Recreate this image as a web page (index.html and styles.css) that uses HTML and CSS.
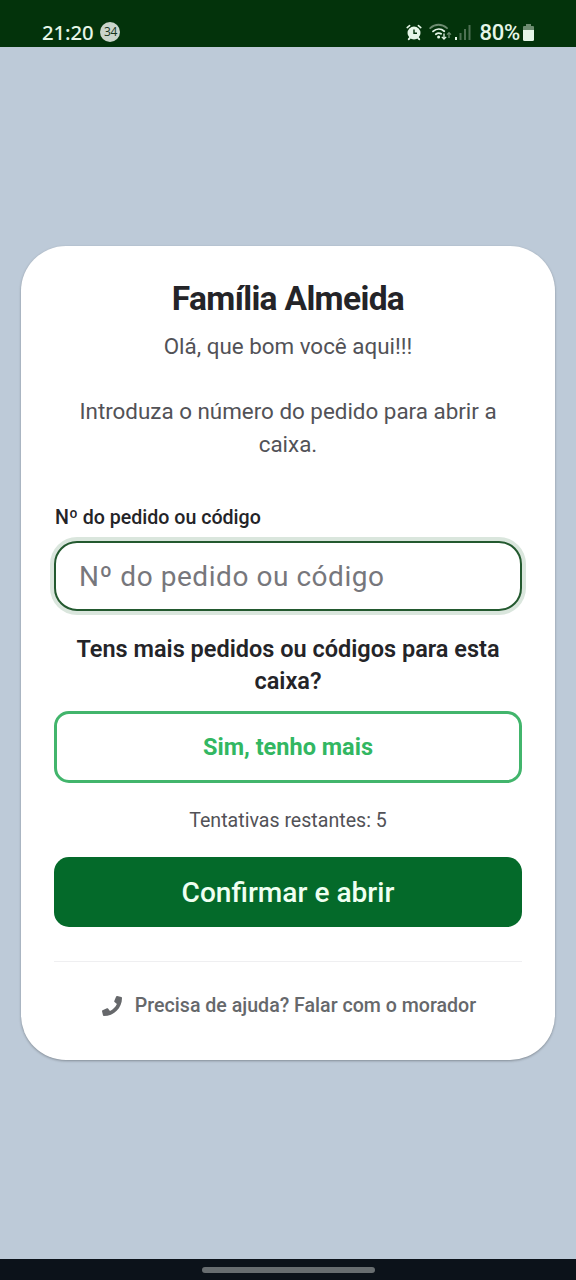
FILE: index.html
```html
<!DOCTYPE html>
<html lang="pt">
<head>
<meta charset="utf-8">
<title>Família Almeida</title>
<link rel="stylesheet" href="styles.css">
</head>
<body>
<header class="status">
  <div class="status-left"><span class="clock">21:20</span><span class="count">34</span></div>
  <div class="status-right">
    <svg class="alarm" width="16" height="17" viewBox="0 0 16 17"><g fill="none" stroke="#e6f6e8" stroke-linecap="round"><path stroke-width="1.6" d="M1.2 3.6 3.6 1.6M14.8 3.6 12.4 1.6"/><path stroke-width="2" d="M4 13.8 2.8 15.2M12 13.8l1.2 1.4"/></g><circle cx="8" cy="9" r="6.5" fill="#e6f6e8"/><path d="M8 5.5V9.3H11" fill="none" stroke="#03330b" stroke-width="1.4"/></svg>
    <svg class="wifi" width="23" height="18" viewBox="0 0 23 18"><g fill="none" stroke-linecap="round" stroke-width="1.8"><path stroke="#6d8b70" d="M1.2 5.2C6 .6 13 .6 18 5.2"/><path stroke="#e6f6e8" d="M4 8.400c3.500-3.100 8-3.100 11.300-.2M6.800 11.300c1.700-1.400 3.700-1.500 5.300-.5"/></g><circle cx="9.600" cy="14" r="1.500" fill="#e6f6e8"/><path d="M15 10.500v5.500m-2.200-2.100 2.200 2.200 2.200-2.200" fill="none" stroke="#e6f6e8" stroke-width="1.300"/><path d="M20 15V9.600m-2 2 2-2 2 2" fill="none" stroke="#6d8b70" stroke-width="1.300"/></svg>
    <svg class="signal" width="16" height="16" viewBox="0 0 16 16"><path fill="#e6f6e8" d="M0 13h2v3H0z"/><path fill="#4f7154" d="M4.500 9h2v7h-2zM9 5h2v11H9zM13.500 1h2v15h-2z"/></svg>
    <span class="percent">80%</span>
    <svg class="battery" width="11" height="17" viewBox="0 0 11 17"><path fill="#6d8b70" d="M3 0h5v2h2a1 1 0 0 1 1 1v3H0V3a1 1 0 0 1 1-1h2z"/><path fill="#e6f6e8" d="M0 6h11v9.500a1.500 1.500 0 0 1-1.500 1.500h-8A1.500 1.500 0 0 1 0 15.500z"/></svg>
  </div>
</header>
<main class="page">
  <section class="card">
    <h1 class="title">Família Almeida</h1>
    <p class="intro">Olá, que bom você aqui!!!</p>
    <p class="intro intro-main">Introduza o número do pedido para abrir a<br>caixa.</p>
    <label class="label" for="order">Nº do pedido ou código</label>
    <input class="field" id="order" placeholder="Nº do pedido ou código">
    <p class="question">Tens mais pedidos ou códigos para esta<br>caixa?</p>
    <button class="button more">Sim, tenho mais</button>
    <p class="attempts">Tentativas restantes: 5</p>
    <button class="button confirm">Confirmar e abrir</button>
    <footer class="help">
      <svg width="20" height="20" viewBox="0 0 512 512"><path fill="#66686b" d="M493.400 24.600l-104-24c-11.300-2.600-22.900 3.300-27.500 13.900l-48 112c-4.200 9.800-1.400 21.300 6.900 28l60.600 49.600c-36 76.700-98.900 140.500-177.200 177.200l-49.600-60.600c-6.800-8.300-18.200-11.100-28-6.900l-112 48C3.900 366.500-2 378.100.6 389.400l24 104C27.100 504.200 36.700 512 48 512c256.100 0 464-207.500 464-464 0-11.200-7.700-20.900-18.600-23.400z"/></svg>
      <span class="help-text">Precisa de ajuda? Falar com o morador</span>
    </footer>
  </section>
</main>
<div class="navbar"><div class="handle"></div></div>
</body>
</html>
```
FILE: styles.css
```css
* { box-sizing: border-box; }
body { margin: 0; height: 1280px; display: flex; flex-direction: column; background: #bdcad8; font-family: Roboto, sans-serif; color: #242428; text-align: center; }
h1, p { margin: 0; white-space: nowrap; }
.status { height: 47px; flex: none; background: #03330b; color: #e6f6e8; display: flex; justify-content: space-between; padding: 17px 42px 0; }
.status-left, .status-right { display: flex; align-items: center; height: 30px; }
.clock { font: 500 20.300px/30px "Noto Sans", "Open Sans", sans-serif; letter-spacing: -0.1px; }
.count { width: 20px; height: 20px; margin-left: 7px; border-radius: 50%; background: #cad5cb; color: #17351c; font: 500 12px/20px "Open Sans", sans-serif; letter-spacing: -0.5px; }
.wifi { margin-left: 7px; }
.signal { margin-left: 3px; }
.percent { margin-left: 8px; font-size: 22px; font-weight: 500; letter-spacing: -0.2px; }
.battery { margin-left: 3px; }
.page { flex: 1; padding: 199px 21px 0; }
.card { height: 814px; border-radius: 45px; background: #fff; padding: 32px 33px 0; display: flex; flex-direction: column; box-shadow: 0 1px 3px rgba(0,0,0,.2), 0 1px 2px rgba(0,0,0,.12); }
.title { font-size: 33.500px; line-height: 42px; font-weight: 700; letter-spacing: -0.65px; }
.intro { margin-top: 10px; font-size: 22.400px; line-height: 33px; color: #525257; }
.intro-main { margin-top: 32px; }
.label { margin-top: 42px; padding-left: 1px; text-align: left; font-size: 19.600px; line-height: 29px; font-weight: 500; }
.field { margin-top: 9px; width: 100%; height: 70px; flex: none; border: 2px solid #23592f; border-radius: 23px; padding: 0 23px; font: 400 28px/36px Roboto, sans-serif; letter-spacing: .55px; outline: none; box-shadow: 0 0 0 4px #dae6dd; background: #fff; }
.field::placeholder { color: #77777c; opacity: 1; }
.question { margin-top: 22px; font-size: 23.500px; line-height: 32px; font-weight: 600; }
.button { flex: none; width: 100%; border-radius: 15px; font-family: Roboto, sans-serif; padding: 0; }
.more { height: 72px; margin-top: 14px; border: 3px solid #42b56c; background: #fff; color: #32b762; font-size: 23.500px; font-weight: 700; }
.attempts { margin-top: 24px; font-size: 19.600px; line-height: 28px; color: #525257; }
.confirm { height: 70px; margin-top: 22px; border: 0; background: #046a2a; color: #effff1; font-size: 28.100px; font-weight: 500; }
.help { margin-top: 34px; border-top: 1px solid #efeff1; padding: 30px 0 0 2px; display: flex; justify-content: center; align-items: center; gap: 13px; color: #66686b; }
.help-text { font-size: 19.600px; line-height: 28px; font-weight: 500; }
.navbar { height: 21px; flex: none; background: #0c121a; display: flex; justify-content: center; padding-top: 8px; }
.handle { width: 173px; height: 6px; border-radius: 3px; background: #686d70; }
```
